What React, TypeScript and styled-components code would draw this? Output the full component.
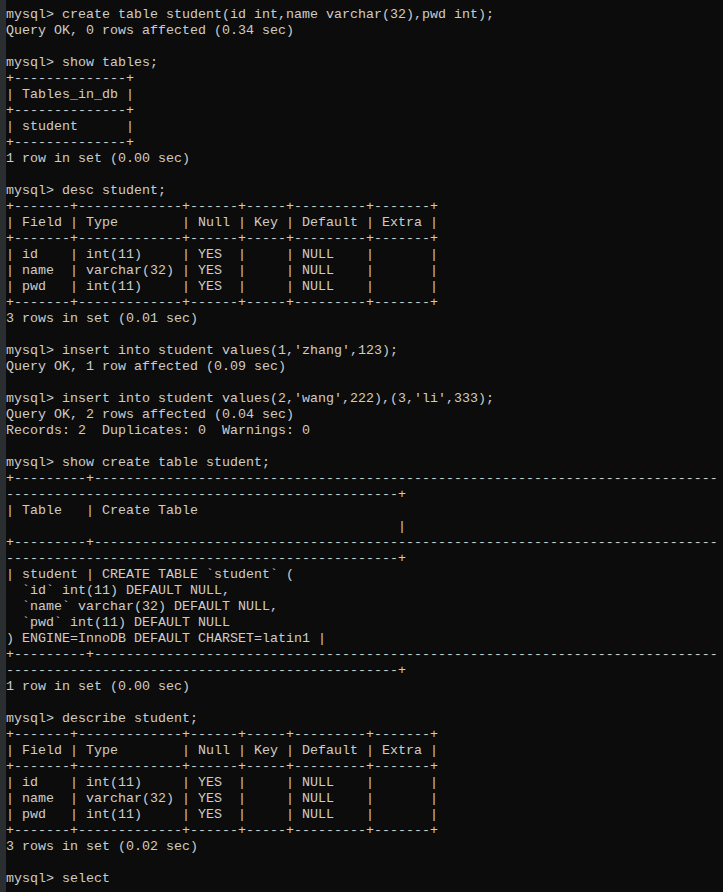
import React from "react";
import styled, { createGlobalStyle } from "styled-components";

const GlobalStyle = createGlobalStyle`
  html, body {
    margin: 0;
    padding: 0;
    background: #0c0c0c;
  }
  #root {
    width: 723px;
    height: 892px;
  }
`;

const Window = styled.div`
  display: flex;
  flex-direction: row;
  width: 723px;
  height: 892px;
  overflow: hidden;
  background: #0c0c0c;
`;

const Gutter = styled.div`
  flex: 0 0 6px;
  height: 100%;
  background: #2b2e31;
`;

const Console = styled.div`
  flex: 1 1 auto;
  min-width: 0;
  display: flex;
  flex-direction: column;
  padding-top: 7px;
  overflow: hidden;
  font-family: "Liberation Mono", "DejaVu Sans Mono", monospace;
  font-size: 13.333px;
  color: #cccccc;
`;

const Line = styled.div`
  height: 16px;
  line-height: 16px;
  white-space: pre;
`;

const dash = (n: number) => "-".repeat(n);
const sp = (n: number) => " ".repeat(n);

const descTable = [
  "+-------+-------------+------+-----+---------+-------+",
  "| Field | Type        | Null | Key | Default | Extra |",
  "+-------+-------------+------+-----+---------+-------+",
  "| id    | int(11)     | YES  |     | NULL    |       |",
  "| name  | varchar(32) | YES  |     | NULL    |       |",
  "| pwd   | int(11)     | YES  |     | NULL    |       |",
  "+-------+-------------+------+-----+---------+-------+",
];

const wideBorderTop = "+---------+" + dash(78);
const wideBorderBottom = dash(49) + "+";

const lines: string[] = [
  "mysql> create table student(id int,name varchar(32),pwd int);",
  "Query OK, 0 rows affected (0.34 sec)",
  "",
  "mysql> show tables;",
  "+--------------+",
  "| Tables_in_db |",
  "+--------------+",
  "| student      |",
  "+--------------+",
  "1 row in set (0.00 sec)",
  "",
  "mysql> desc student;",
  ...descTable,
  "3 rows in set (0.01 sec)",
  "",
  "mysql> insert into student values(1,'zhang',123);",
  "Query OK, 1 row affected (0.09 sec)",
  "",
  "mysql> insert into student values(2,'wang',222),(3,'li',333);",
  "Query OK, 2 rows affected (0.04 sec)",
  "Records: 2  Duplicates: 0  Warnings: 0",
  "",
  "mysql> show create table student;",
  wideBorderTop,
  wideBorderBottom,
  "| Table   | Create Table",
  sp(49) + "|",
  wideBorderTop,
  wideBorderBottom,
  "| student | CREATE TABLE `student` (",
  "  `id` int(11) DEFAULT NULL,",
  "  `name` varchar(32) DEFAULT NULL,",
  "  `pwd` int(11) DEFAULT NULL",
  ") ENGINE=InnoDB DEFAULT CHARSET=latin1 |",
  wideBorderTop,
  wideBorderBottom,
  "1 row in set (0.00 sec)",
  "",
  "mysql> describe student;",
  ...descTable,
  "3 rows in set (0.02 sec)",
  "",
  "mysql> select",
];

export default function App() {
  return (
    <>
      <GlobalStyle />
      <Window>
        <Gutter />
        <Console>
          {lines.map((text, i) => (
            <Line key={i}>{text}</Line>
          ))}
        </Console>
      </Window>
    </>
  );
}
